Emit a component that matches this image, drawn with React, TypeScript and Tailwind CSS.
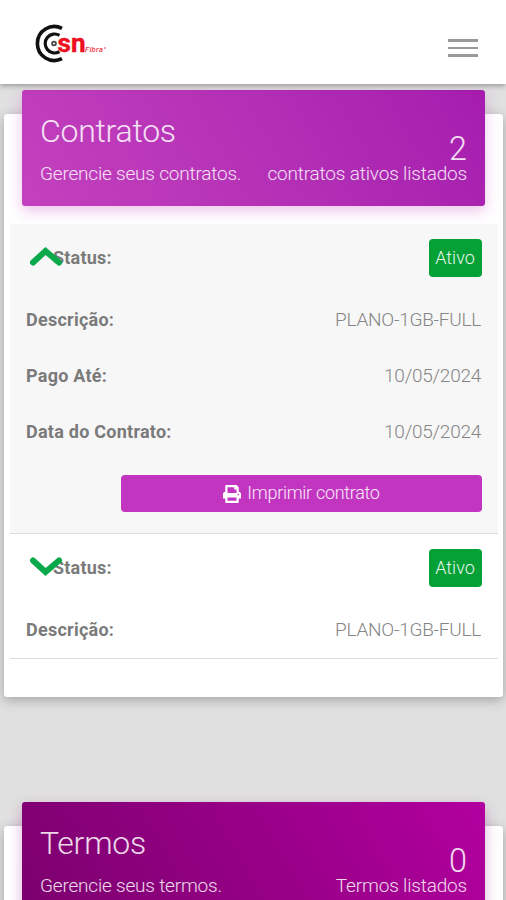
import React from 'react'
import { FaPrint } from 'react-icons/fa'

interface PanelProps {
  title: string
  subtitle: string
  count: number
  countLabel: string
  className: string
}

const Logo: React.FC = () => (
  <svg width="76" height="40" viewBox="0 0 76 40" className="ml-[34px]" aria-label="CSN Fibra">
    <g fill="none" stroke="#111">
      <path d="M28 4.300A17 17 0 1 0 28 34.700" strokeWidth="3.600" />
      <path d="M25.500 11.300A9.500 9.500 0 1 0 25.500 27.700" strokeWidth="3.200" />
      <circle cx="20" cy="19.500" r="1.900" strokeWidth="1.800" stroke="#444" />
    </g>
    <text x="23.500" y="27.500" fontFamily="Roboto, sans-serif" fontSize="25.500" fontWeight="700" fill="#ee1020" stroke="#ee1020" strokeWidth="0.4" textLength="28" lengthAdjust="spacingAndGlyphs">sn</text>
    <text x="51" y="27.500" fontFamily="Roboto, sans-serif" fontSize="7.500" fontWeight="500" fontStyle="italic" fill="#ee3344" textLength="21">Fibra°</text>
  </svg>
)

const Panel: React.FC<PanelProps> = ({ title, subtitle, count, countLabel, className }) => (
  <div className={`mx-[18px] -mt-6 flex h-[116px] justify-between rounded-[3px] px-[18px] text-white/85 ${className}`}>
    <div className="pt-[21px]">
      <h2 className="text-[32px] leading-10 tracking-[-0.25px]">{title}</h2>
      <p className="mt-[11px] text-[19px] leading-6 tracking-[-0.2px]">{subtitle}</p>
    </div>
    <div className="pt-[43px] text-right">
      <div className="text-[34px] leading-[31px]">
        <span className="inline-block origin-right scale-x-95">{count}</span>
      </div>
      <p className="-mt-[2px] text-[19px] leading-6 tracking-[-0.17px]">{countLabel}</p>
    </div>
  </div>
)

const Row: React.FC<{ label: string; children: React.ReactNode }> = ({ label, children }) => (
  <div className="flex h-14 items-center justify-between text-[19px]">
    <span className="-mt-0.5 text-[18px] font-bold tracking-[0.25px] text-[#7a7a7a]">{label}</span>
    <span className="pr-px tracking-[-0.25px] text-[#858585]">{children}</span>
  </div>
)

const StatusRow: React.FC<{ open?: boolean }> = ({ open }) => (
  <div className="flex h-[68px] items-center justify-between">
    <div className="flex items-center">
      <svg width="34" height="22" viewBox="0 0 34 22" className={`relative z-10 ml-[3px] -mr-[10px] ${open ? '-mt-1' : '-mt-0.5'}`} fill="none" stroke="#08a84b" strokeWidth="6">
        <path d={open ? 'M4 17.500L16.500 6L30 17.500' : 'M4 4.500L16.500 16L30 4.500'} strokeLinecap="round" strokeLinejoin="miter" />
      </svg>
      <span className="-mt-0.5 text-[18px] font-bold tracking-[0.22px] text-[#7a7a7a]">Status:</span>
    </div>
    <span className="h-[38px] w-[53px] rounded bg-[#05a136] pr-px text-center text-[18px] leading-[37px] text-white/90">Ativo</span>
  </div>
)

const App: React.FC = () => {
  return (
    <div className="h-[900px] overflow-hidden bg-[#e0e0e0] font-['Roboto',sans-serif] font-light">
      <header className="relative z-10 flex h-[84px] items-center justify-between bg-white pt-1 shadow-[0_1px_6px_rgba(0,0,0,0.4)]">
        <Logo />
        <button className="mr-7 mt-2 flex w-[30px] flex-col gap-[5px]" aria-label="Menu">
          <span className="h-[2.5px] bg-[#999]" />
          <span className="h-[2.5px] bg-[#999]" />
          <span className="h-[2.5px] bg-[#999]" />
        </button>
      </header>

      <main className="pl-1 pr-[3px]">
        <section className="mt-[30px] flow-root h-[583px] rounded-[3px] bg-white shadow-[0_3px_12px_rgba(0,0,0,0.28)]">
          <Panel
            title="Contratos"
            subtitle="Gerencie seus contratos."
            count={2}
            countLabel="contratos ativos listados"
            className="bg-linear-60 from-[#c341be] to-[#a51cae] shadow-[0_5px_14px_rgba(195,60,190,0.3)]"
          />
          <div className="ml-1.5 mr-[5px] mt-[18px]">
            <div className="h-[310px] border-b border-[#dcdcdc] bg-[#f7f7f7] px-4">
              <StatusRow open />
              <Row label="Descrição:">PLANO-1GB-FULL</Row>
              <Row label="Pago Até:">10/05/2024</Row>
              <Row label="Data do Contrato:">10/05/2024</Row>
              <button className="mt-[15px] ml-[95px] flex h-[37px] w-[361px] items-center justify-center gap-[6px] rounded bg-[#c135c1] text-[18px] tracking-[-0.3px] text-white/90">
                <FaPrint className="h-[18px] w-[18px] text-white" />
                <span className="-mt-0.5">Imprimir contrato</span>
              </button>
            </div>
            <div className="h-[125px] border-b border-[#dcdcdc] px-4">
              <StatusRow />
              <Row label="Descrição:">PLANO-1GB-FULL</Row>
            </div>
          </div>
        </section>

        <section className="mt-[129px] flow-root h-[200px] rounded-[3px] bg-white shadow-[0_3px_12px_rgba(0,0,0,0.28)]">
          <Panel
            title="Termos"
            subtitle="Gerencie seus termos."
            count={0}
            countLabel="Termos listados"
            className="bg-linear-60 from-[#7b006d] to-[#b2009f] shadow-[0_5px_14px_rgba(140,0,130,0.3)]"
          />
        </section>
      </main>
    </div>
  )
}

export default App
